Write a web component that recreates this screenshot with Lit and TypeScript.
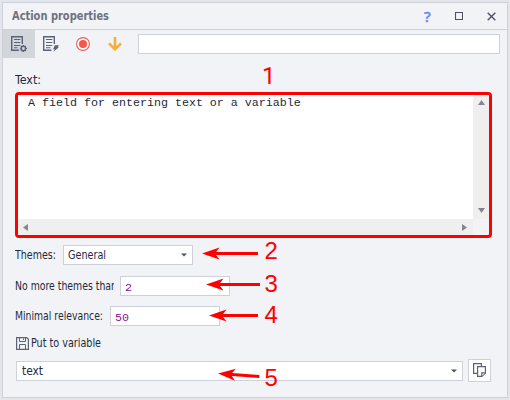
import { LitElement, html, css, svg } from "lit";
import { customElement } from "lit/decorators.js";

@customElement("app-root")
export class AppRoot extends LitElement {
  static styles = css`
    :host {
      display: block;
      position: relative;
      box-sizing: border-box;
      width: 510px;
      height: 400px;
      padding: 2px;
      overflow: hidden;
      background: #e4e5e9;
      font: 11.6px/16px "DejaVu Sans Condensed", "DejaVu Sans", sans-serif;
      font-stretch: condensed;
      color: #25293a;
    }
    * { box-sizing: border-box; }
    svg { display: block; flex: none; }
    .window {
      display: flex;
      flex-direction: column;
      width: 506px;
      height: 396px;
      border: 1px solid #cdd1db;
      background: #f1f3f7;
    }
    .title {
      display: flex;
      align-items: center;
      flex: none;
      height: 27px;
      padding: 0 11px 0 9px;
      border-bottom: 1px solid #cdd1db;
    }
    .name { flex: 1; font-weight: bold; font-size: 11.4px; }
    .controls { display: flex; align-items: center; }
    .help { width: 8px; margin-right: 23px; font: 500 15px/16px "Noto Sans", sans-serif; color: #5c8df6; -webkit-text-stroke: .4px #5c8df6; }
    .controls svg + svg { margin-left: 24px; }
    .toolbar { display: flex; flex: none; height: 28px; }
    .tool { width: 32px; height: 28px; display: flex; align-items: center; justify-content: center; }
    .on { background: #d2d5da; }
    .box { background: #fff; border: 1px solid #cdd1db; height: 20px; }
    .search { width: 362px; margin: 4px 0 0 7px; }
    .form { padding: 14px 0 0 12px; }
    .label { overflow: hidden; }
    .label text { fill: #25293a; }
    .name .label text { fill: #6d727e; }
    .editor {
      display: grid;
      grid-template: 124px 16px / 455px 16px;
      width: 477px;
      height: 146px;
      margin: 4px 0 7px 0;
      border: 3px solid #f00;
      border-radius: 4px;
    }
    .text { background: #fff; font: 11.67px/16px "Liberation Mono", monospace; padding: 0 0 0 10px; white-space: pre; }
    .bar { background: #efefef; display: flex; justify-content: space-between; align-items: center; }
    .vert { flex-direction: column; padding: 5px 0 6px; }
    .horz { padding: 0 6px 0 5px; }
    .row { display: flex; align-items: center; }
    .select { display: flex; align-items: center; justify-content: space-between; padding: 0 5px 0 4px; }
    .themes { width: 130px; }
    .more { margin-top: 11px; }
    .more .num { margin-left: 6px; }
    .relevance { margin-top: 10px; }
    .num { width: 110px; padding: 3px 0 0 4px; font: 11.67px/16px "Liberation Mono", monospace; color: #8a0f8f; }
    .put { margin: 9px 0 8px 1px; }
    .put .label { margin-left: 2px; }
    .target { width: 447px; margin: 0 5px 0 1px; padding-left: 5px; }
    .copy { width: 23px; height: 23px; display: flex; padding: 3px 0 0 4px; }
    .notes { position: absolute; left: 0; top: 0; pointer-events: none; }
    .notes text { font: 24px "Liberation Sans", sans-serif; fill: #f00; }
    .notes .one { font-family: Roboto, sans-serif; }
  `;

  private label(text: string, width: number, box = width) {
    return html`<svg class="label" width=${box} height="16"><text x="0" y="12" textLength=${width} lengthAdjust="spacingAndGlyphs">${text}</text></svg>`;
  }

  private arrow(x: number, y: number, end: number, endY = y) {
    const angle = (Math.atan2(endY - y, end - x) * 180) / Math.PI;
    return svg`<g transform="translate(${x} ${y}) rotate(${angle})" fill="#f00">
      <path d="M0 0L17.5 -6L14 -1.5H${end - x}V1.5H14L17.5 6Z"/></g>`;
  }

  private caret() {
    return html`<svg width="6" height="4" viewBox="0 0 6 4"><path d="M0 .5H6L3 3.5Z" fill="#4d5361"/></svg>`;
  }

  render() {
    return html`
      <div class="window">
        <div class="title">
          <div class="name">${this.label("Action properties", 97, 98)}</div>
          <div class="controls">
            <span class="help">?</span>
            <svg width="8" height="8" viewBox="0 0 8 8"><path d="M.5 .5H7.5V7.5H.5Z" fill="none" stroke="#4d5361" stroke-width="1.1"/></svg>
            <svg width="9" height="9" viewBox="0 0 9 9"><path d="M.7 .7L8.3 8.3M8.3 .7L.7 8.3" stroke="#4d5361" stroke-width="1.4"/></svg>
          </div>
        </div>
        <div class="toolbar">
          <div class="tool on">
            <svg width="16" height="16" viewBox="0 0 16 16" fill="none" stroke="#5a6378">
              <path d="M8 14.2H.7V.7H11.3V8" stroke-width="1.4"/>
              <path d="M3 3.5H9.3M3 6.5H9.3M3 9.5H9.3M3 11.8H6.5" stroke-width="1.1"/>
              <circle cx="12.4" cy="12.5" r="2.2" stroke-width="1.5"/>
              <path d="M12.4 9V10.2M12.4 14.8V16M8.9 12.5H10M14.7 12.5H16M9.9 10L10.7 10.8M14.1 14.2L14.9 15M14.9 10L14.1 10.8M10.7 14.2L9.9 15" stroke-width="1.2"/>
            </svg>
          </div>
          <div class="tool">
            <svg width="16" height="16" viewBox="0 0 16 16" fill="none" stroke="#5a6378">
              <path d="M8.5 14.2H.7V.7H11.3V8" stroke-width="1.4"/>
              <path d="M3 3.5H9.3M3 6.5H9.3M3 9.5H9.3M3 11.8H7.5" stroke-width="1.1"/>
              <path d="M11.8 9.3H16L14.6 11.3H16L10.2 16L11.9 13.2H10Z" fill="#5a6378" stroke="none"/>
            </svg>
          </div>
          <div class="tool">
            <svg width="14" height="14" viewBox="0 0 14 14"><circle cx="7" cy="7" r="6.4" fill="#fff" stroke="#f5574f" stroke-width="1.1"/><circle cx="7" cy="7" r="4" fill="#f5574f"/></svg>
          </div>
          <div class="tool">
            <svg width="14" height="14" viewBox="0 0 14 14"><path d="M7 0V12M1 6.3L7 12.3L13 6.3" fill="none" stroke="#f6ad3c" stroke-width="2.6"/></svg>
          </div>
          <div class="box search"></div>
        </div>
        <div class="form">
          ${this.label("Text:", 26, 30)}
          <div class="editor">
            <div class="text">A field for entering text or a variable</div>
            <div class="bar vert">
              <svg width="7" height="5"><path d="M0 5L3.5 0L7 5Z" fill="#858591"/></svg>
              <svg width="7" height="5"><path d="M0 0H7L3.5 5Z" fill="#858591"/></svg>
            </div>
            <div class="bar horz">
              <svg width="5" height="7"><path d="M5 0V7L0 3.5Z" fill="#858591"/></svg>
              <svg width="5" height="7"><path d="M0 0L5 3.5L0 7Z" fill="#858591"/></svg>
            </div>
          </div>
          <div class="row">
            ${this.label("Themes:", 41, 48)}
            <div class="box select themes">${this.label("General", 38, 48)}${this.caret()}</div>
          </div>
          <div class="row more">
            ${this.label("No more themes than", 102, 99)}
            <div class="box num">2</div>
          </div>
          <div class="row relevance">
            ${this.label("Minimal relevance:", 88, 95)}
            <div class="box num">50</div>
          </div>
          <div class="row put">
            <svg width="13" height="13" viewBox="0 0 13 13" fill="none" stroke="#5a6378"><path d="M.6 .6H10.7L12.4 2.3V12.4H.6Z" stroke-width="1.2"/><path d="M3.5 .5V4.5H9.5V.5M3.5 12.5V7.5H9.5V12.5M7.5 1.5V3"/></svg>
            ${this.label("Put to variable", 70, 80)}
          </div>
          <div class="row">
            <div class="box select target">${this.label("text", 21, 26)}${this.caret()}</div>
            <div class="box copy">
              <svg width="14" height="15" viewBox="0 0 14 15" fill="#fff" stroke="#5a6378" stroke-width="1.2"><path d="M.6 .6H8.4V10.4H.6Z"/><path d="M4.6 3.6H12.4V10L9 13.4H4.6Z"/><path d="M8.8 13V9.8H12.4"/></svg>
            </div>
          </div>
        </div>
      </div>
      <svg class="notes" width="510" height="400">
        ${this.arrow(202, 253.5, 258)}
        ${this.arrow(206, 284.5, 260)}
        ${this.arrow(209, 315.5, 258)}
        ${this.arrow(218, 373.5, 259.5, 376.5)}
        <text class="one" x="262" y="83.5">1</text>
        <text x="264.5" y="258.5">2</text>
        <text x="264.5" y="291.5">3</text>
        <text x="264.5" y="322.5">4</text>
        <text x="264.5" y="386">5</text>
      </svg>
    `;
  }
}
